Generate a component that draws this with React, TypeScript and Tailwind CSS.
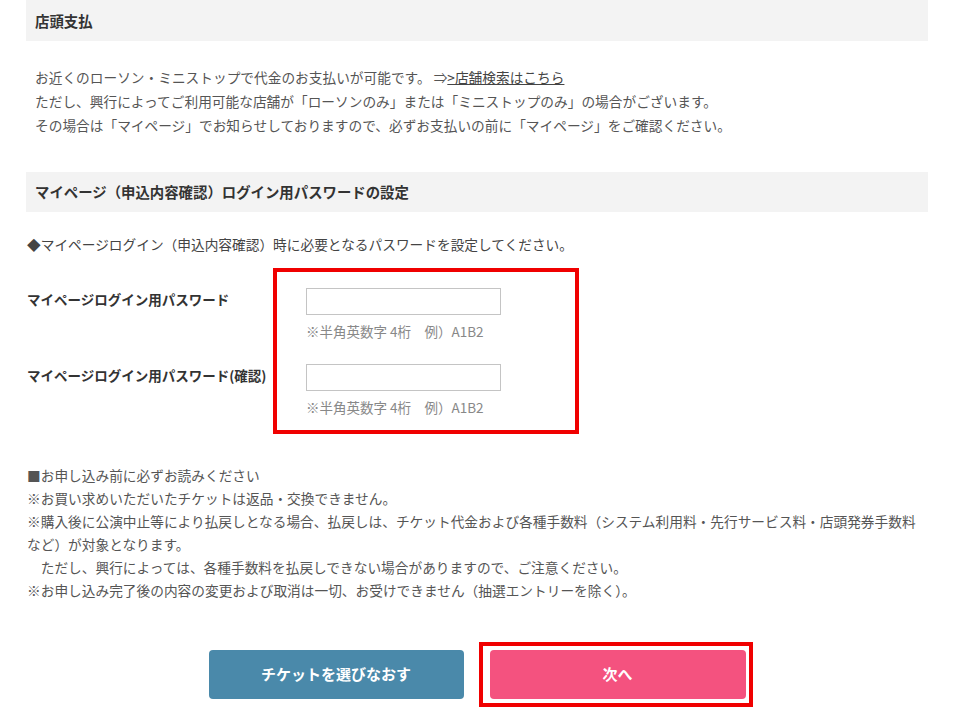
import React from "react";

const font = "font-['Noto_Sans_CJK_JP','Noto_Sans',sans-serif]";

function SectionHeader({ children, className = "" }: { children: React.ReactNode; className?: string }) {
  return (
    <h2
      className={`flex items-center bg-[#f3f3f3] px-[9px] text-[14.4px] font-bold text-[#333] ${className}`}
    >
      {children}
    </h2>
  );
}

function PasswordRow({ label }: { label: string }) {
  return (
    <div className="flex">
      <label className="w-[280px] pl-[1px] text-[13.5px] font-bold leading-[22px] text-[#333]">{label}</label>
      <div>
        <input
          type="password"
          className="block h-[27px] w-[195px] border border-[#c4c4c4] bg-white px-2 text-[13px] outline-none"
        />
        <p className="mt-[7px] text-[13.5px] leading-[18px] text-[#888]">※半角英数字 4桁　例）A1B2</p>
      </div>
    </div>
  );
}

export default function App() {
  return (
    <div className={`min-h-[720px] w-[960px] bg-white ${font}`}>
      <div className="ml-[26px] w-[902px]">
        <SectionHeader className="h-[41px]">店頭支払</SectionHeader>

        <div className="mt-[24px] px-[9px] text-[13.7px] leading-[24px] text-[#555]">
          <p className="whitespace-nowrap">
            お近くのローソン・ミニストップで代金のお支払いが可能です。 ⇒
            <a href="#" className="text-[#444] underline">
              &gt;店舗検索はこちら
            </a>
          </p>
          <p className="whitespace-nowrap">
            ただし、興行によってご利用可能な店舗が「ローソンのみ」または「ミニストップのみ」の場合がございます。
          </p>
          <p className="whitespace-nowrap">
            その場合は「マイページ」でお知らせしておりますので、必ずお支払いの前に「マイページ」をご確認ください。
          </p>
        </div>

        <SectionHeader className="mt-[35px] h-[40px]">マイページ（申込内容確認）ログイン用パスワードの設定</SectionHeader>

        <p className="mt-[20px] pl-[1px] text-[13.7px] leading-[24px] text-[#444]">
          ◆マイページログイン（申込内容確認）時に必要となるパスワードを設定してください。
        </p>

        <div className="relative mt-[32px] flex flex-col gap-[24px]">
          <PasswordRow label="マイページログイン用パスワード" />
          <PasswordRow label="マイページログイン用パスワード(確認)" />
          <div className="pointer-events-none absolute -top-[20px] -bottom-[18px] left-[247px] w-[306px] border-4 border-[#f00000]" />
        </div>

        <div className="mt-[48px] pl-[1px] text-[13.7px] leading-[23px] text-[#555]">
          <p>■お申し込み前に必ずお読みください</p>
          <p>※お買い求めいただいたチケットは返品・交換できません。</p>
          <p className="whitespace-nowrap">
            ※購入後に公演中止等により払戻しとなる場合、払戻しは、チケット代金および各種手数料（システム利用料・先行サービス料・店頭発券手数料
          </p>
          <p>など）が対象となります。</p>
          <p>　ただし、興行によっては、各種手数料を払戻しできない場合がありますので、ご注意ください。</p>
          <p>※お申し込み完了後の内容の変更および取消は一切、お受けできません（抽選エントリーを除く）。</p>
        </div>

        <div className="mt-[48px] flex justify-center gap-[26px]">
          <button
            type="button"
            className="h-[49px] w-[255px] rounded-[4px] bg-[#4a89aa] text-[15px] font-bold text-white"
          >
            チケットを選びなおす
          </button>
          <div className="relative">
            <button
              type="button"
              className="h-[49px] w-[256px] rounded-[4px] bg-[#f4527f] text-[15px] font-bold text-white"
            >
              次へ
            </button>
            <div className="pointer-events-none absolute -top-[8px] -bottom-[8px] -left-[11px] -right-[7px] border-4 border-[#f00000]" />
          </div>
        </div>
      </div>
    </div>
  );
}
